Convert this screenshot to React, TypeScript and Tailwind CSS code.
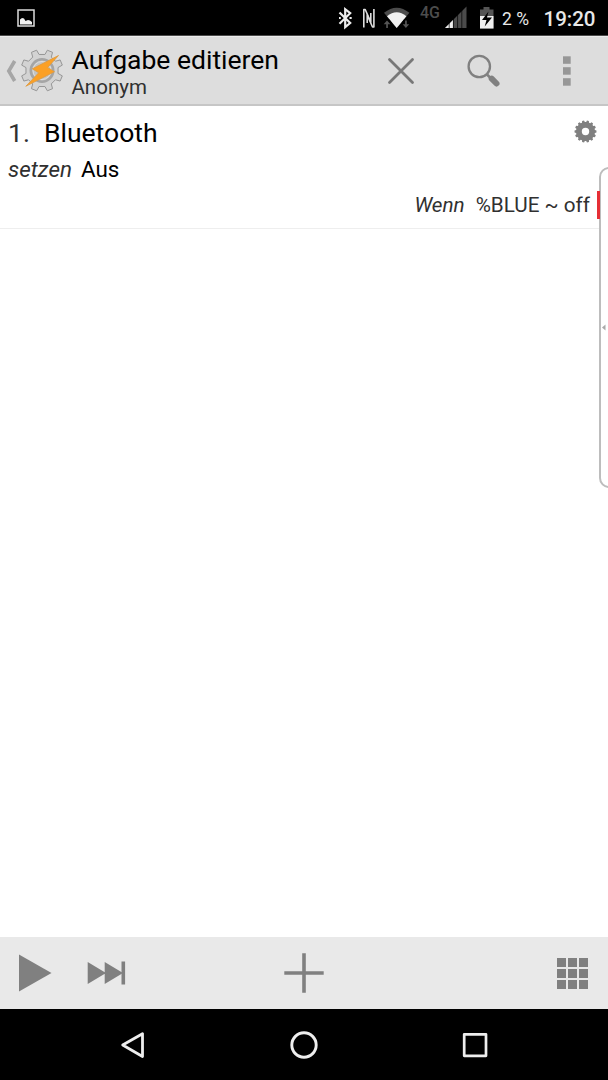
import { Fragment, type ReactNode } from 'react'

// Outline of a cog wheel with straight-sided teeth
function gearPath(cx: number, cy: number, teeth: number, outer: number, inner: number, top: number, root: number) {
  const step = (Math.PI * 2) / teeth
  const points: string[] = []
  for (let i = 0; i < teeth; i++) {
    const mid = i * step - Math.PI / 2 + step / 2
    const corners: [number, number][] = [
      [mid - step * root, inner],
      [mid - step * top, outer],
      [mid + step * top, outer],
      [mid + step * root, inner],
    ]
    corners.forEach(([a, r]) => {
      points.push(`${(cx + Math.cos(a) * r).toFixed(2)} ${(cy + Math.sin(a) * r).toFixed(2)}`)
    })
  }
  return `M${points.join('L')}Z`
}

function TaskerLogo() {
  return (
    <svg className="h-11 w-11 shrink-0" viewBox="0 0 44 44" fill="none">
      <path d={gearPath(22, 21.5, 8, 21, 16.3, 0.17, 0.27)} fill="#d3d3d3" stroke="#969696" strokeWidth="1" strokeLinejoin="round" />
      <circle cx="22" cy="21.5" r="11.2" fill="#c4c4c4" stroke="#a5a5a5" strokeWidth="2.6" />
      <circle cx="22" cy="21.5" r="9" stroke="#dedede" strokeWidth="1" />
      <path d="M38.5 6.5 12.3 19.8l6.4 4L5.8 37.3l28.7-14.6-6.8-4.2Z" fill="#fba026" stroke="#dc9a44" strokeWidth="0.8" strokeLinejoin="round" />
    </svg>
  )
}

function StatusBar() {
  return (
    <div className="flex h-[36px] shrink-0 items-start border-b border-[#4a4a4a] bg-black text-[#e8e8e8]">
      <svg className="mt-[9px] ml-[17px] h-[18px] w-[18px]" viewBox="0 0 18 18" fill="none">
        <rect x="1" y="1" width="16" height="16" stroke="#dcdcdc" strokeWidth="1.5" />
        <path d="M3 15.5v-5l2-1.5 2 .5 1.5 2.5 2.5-1 2 .5 2 1.5v2.5Z" fill="#f2f2f2" />
      </svg>

      <svg className="ml-[303px] h-[36px] w-[14px]" viewBox="338 0 14 36" fill="none" stroke="#ededed" strokeWidth="2.2">
        <path d="m339.5 12.5 10.7 10.5-5 4.2V9.2l5 4-10.7 10.5" />
        <path d="M339 18h1.8M349.500 18h2.2" />
      </svg>
      <svg className="ml-[10px] h-[36px] w-[14px]" viewBox="362 0 14 36" fill="none" stroke="#dedede" strokeWidth="1.6" strokeLinejoin="round">
        <path d="M363.800 27.500V9.500h1.400l5.600 12.500V13" />
        <path d="M373.900 9v18h-1.400l-5.300-12v8" />
      </svg>
      <svg className="ml-[7px] h-[36px] w-[27px]" viewBox="383 0 27 36">
        <path d="M384 12.800Q396.700 2.500 409.400 12.800L396.700 28Z" fill="#4b4b4b" />
        <path d="M387 16.200Q396.700 8.500 406.400 16.200L396.700 28Z" fill="#f0f0f0" />
        <path d="M383 19.500h6.500l2 3-2 7h-6.500ZM403.900 19.500h6.100v10h-6.500l-1.600-7Z" fill="#000" />
        <path d="M387 20.500l-3.300 3.800h2.500V28h1.700v-3.700h2.500ZM405.900 28l-3.200-3.800h2.400V20.500h1.700v3.700h2.400Z" fill="#555" />
      </svg>
      <span className="ml-[10px] w-[25px] pt-[3px] text-[16px] leading-[20px] font-medium text-[#4d4d4d]">4G</span>
      <svg className="h-[36px] w-[22px]" viewBox="445 0 22 36">
        <path d="M445 28 466.500 6.500V28Z" fill="#4b4b4b" />
        <path d="M445 28 453 20V28Z" fill="#f0f0f0" />
        <path d="M449.200 20v8M453.400 14v14M457.600 10v18M461.800 6v22" stroke="#000" strokeWidth="0.7" />
      </svg>
      <svg className="ml-[12px] h-[36px] w-[15px]" viewBox="479 0 15 36">
        <path d="M483.500 7h6v2.500h4V28.500H480V9.500h3.500Z" fill="#555" />
        <path d="M480 16h13.500v12.500H480Z" fill="#f0f0f0" />
        <path d="M488.500 11.500 482 20h4.500l-1.800 6.500 7.300-9h-5Z" fill="#000" />
      </svg>
      <span className="ml-[8px] w-[41.5px] pt-[9px] text-[17.5px] leading-[20px] whitespace-nowrap">2 %</span>
      <span className="pt-[7px] text-[20.5px] leading-[24px] font-medium whitespace-nowrap">19:20</span>
    </div>
  )
}

function ActionBar() {
  return (
    <header className="flex h-[70px] shrink-0 items-center border-t border-b-2 border-t-[#ececec] border-b-[#c6c6c6] bg-[#dddddd]">
      <svg className="ml-[5px] h-6 w-[15px]" viewBox="0 0 15 24" fill="none">
        <path d="M9.700 2 3.800 12l5.900 10" stroke="#a6a6a6" strokeWidth="3.6" />
      </svg>
      <TaskerLogo />
      <div className="ml-[7.5px] flex w-[289px] flex-col pt-[3px]">
        <h1 className="text-[26.5px] leading-[30px] whitespace-nowrap text-black">Aufgabe editieren</h1>
        <p className="text-[20.5px] leading-[24px] text-[#303030]">Anonym</p>
      </div>
      <div className="flex flex-1 items-center justify-between pr-[25px] pl-[26px]">
        <svg className="h-[28px] w-[28px]" viewBox="0 0 28 28" stroke="#787878" strokeWidth="2.8" strokeLinecap="round">
          <path d="m2.500 2.500 23 23M25.500 2.500l-23 23" />
        </svg>
        <svg className="h-[36px] w-[36px]" viewBox="0 0 36 36" fill="none" stroke="#808080">
          <circle cx="14.3" cy="13.5" r="10.7" strokeWidth="2.3" />
          <path d="m22 21.500 4 4" strokeWidth="2.5" />
          <path d="m26.700 25.700 4.800 4.800" strokeWidth="6" strokeLinecap="round" />
        </svg>
        <svg className="h-[30px] w-[32px]" viewBox="0 0 32 30" fill="#979797">
          <rect x="12" y="0.3" width="7.7" height="7.5" />
          <rect x="12" y="11.2" width="7.7" height="7.5" />
          <rect x="12" y="22.2" width="7.7" height="7.5" />
        </svg>
      </div>
    </header>
  )
}

interface Action {
  title: string
  params: { label: string; value: string }[]
  condition?: string
}

const actions: Action[] = [
  {
    title: 'Bluetooth',
    params: [{ label: 'setzen', value: 'Aus' }],
    condition: '%BLUE ~ off',
  },
]

function ActionRow({ index, action }: { index: number; action: Action }) {
  return (
    <li className="flex h-[123px] flex-col border-b border-[#eeeeee]">
      <div className="flex h-[46px] items-center pt-[8px] pr-[11px] pl-[8px] text-[26.5px] leading-[32px]">
        <span className="w-[36px] text-[#303030]">{index}.</span>
        <span className="flex-1 text-black">{action.title}</span>
        <svg className="mb-[3px] h-[23px] w-[23px]" viewBox="0 0 23 23">
          <path d={`${gearPath(11.5, 11.5, 14, 11, 9.5, 0.2, 0.34)}M15.200 11.500a3.700 3.700 0 1 0-7.400 0a3.700 3.700 0 1 0 7.400 0Z`} fill="#808080" fillRule="evenodd" />
        </svg>
      </div>
      <div className="flex pt-[3px] pl-[8px] text-[22.4px] leading-[28px]">
        {action.params.map((param) => (
          <Fragment key={param.label}>
            <span className="w-[73px] text-[#303030] italic">{param.label}</span>
            <span className="text-black">{param.value}</span>
          </Fragment>
        ))}
      </div>
      {action.condition && (
        <div className="flex items-center justify-end pt-[8px] text-[20.7px] leading-[28px] text-[#303030]">
          <span className="mr-[11px] italic">Wenn</span>
          <span>{action.condition}</span>
          <span className="relative z-10 mr-[8px] ml-[7px] h-[28px] w-[3px] bg-[#e62e35]" />
        </div>
      )}
    </li>
  )
}

function BarIcon({ className, viewBox, children }: { className: string; viewBox: string; children: ReactNode }) {
  return (
    <svg className={className} viewBox={viewBox} fill="#808080">
      {children}
    </svg>
  )
}

function BottomBar() {
  return (
    <footer className="flex h-[72px] shrink-0 items-center bg-[#e9e9e9]">
      <BarIcon className="ml-[18px] h-[38px] w-[34px]" viewBox="0 0 34 38">
        <path d="M1 0.500v37L33.500 19Z" />
      </BarIcon>
      <BarIcon className="ml-[35px] h-[24px] w-[39px]" viewBox="0 0 39 24">
        <path d="M0.700 1v22L19 12ZM17.700 1v22l18.300-11Z" />
        <rect x="34.5" y="0.5" width="3.6" height="23" />
      </BarIcon>
      <BarIcon className="ml-[158px] h-[40px] w-[40px]" viewBox="0 0 40 40">
        <path d="M18.200 0.300h3.600v17.900h17.900v3.600H21.800v17.900h-3.600V21.800H0.300v-3.600h17.900Z" />
      </BarIcon>
      <div className="mr-[20px] ml-auto grid grid-cols-3 gap-[2px]">
        {Array.from({ length: 9 }, (_, i) => (
          <span key={i} className="h-[9px] w-[9px] bg-[#808080]" />
        ))}
      </div>
    </footer>
  )
}

function NavBar() {
  return (
    <nav className="flex h-[71px] shrink-0 items-center justify-center gap-[143px] bg-black">
      <svg className="h-7 w-7" viewBox="0 0 28 28" fill="none" stroke="#eeeeee" strokeWidth="2.8" strokeLinejoin="round">
        <path d="M3.700 14 23.500 2.700v22.800Z" />
      </svg>
      <svg className="h-7 w-7" viewBox="0 0 28 28" fill="none" stroke="#eeeeee" strokeWidth="2.9">
        <circle cx="14" cy="14" r="12.2" />
      </svg>
      <svg className="h-7 w-7" viewBox="0 0 28 28" fill="none" stroke="#eeeeee" strokeWidth="2.7" strokeLinejoin="round">
        <rect x="3.2" y="3.3" width="21.8" height="21.5" />
      </svg>
    </nav>
  )
}

export default function App() {
  return (
    <div className="relative flex h-[1080px] w-[608px] flex-col overflow-hidden bg-white font-['Roboto',sans-serif]">
      <StatusBar />
      <ActionBar />
      <ul className="flex-1">
        {actions.map((action, i) => (
          <ActionRow key={action.title} index={i + 1} action={action} />
        ))}
      </ul>
      {/* Edge panel handle */}
      <div className="absolute top-[167px] right-[-8px] flex h-[321px] w-[17px] items-center rounded-l-[10px] border-2 border-[#bdbdbd] bg-white">
        <svg className="h-[7px] w-[5px]" viewBox="0 0 5 7" fill="#aaaaaa">
          <path d="M4.500 0.500v6L1 3.500Z" />
        </svg>
      </div>
      <BottomBar />
      <NavBar />
    </div>
  )
}
